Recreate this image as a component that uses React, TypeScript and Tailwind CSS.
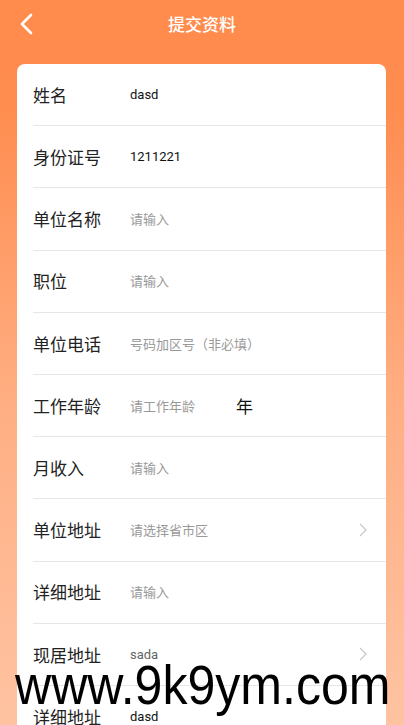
import React from "react";

type Row = {
  label: string;
  value?: string;
  placeholder?: string;
  gray?: boolean;
  arrow?: boolean;
  suffix?: string;
};

const rows: Row[] = [
  { label: "姓名", value: "dasd" },
  { label: "身份证号", value: "1211221" },
  { label: "单位名称", placeholder: "请输入" },
  { label: "职位", placeholder: "请输入" },
  { label: "单位电话", placeholder: "号码加区号（非必填）" },
  { label: "工作年龄", placeholder: "请工作年龄", suffix: "年" },
  { label: "月收入", placeholder: "请输入" },
  { label: "单位地址", placeholder: "请选择省市区", arrow: true },
  { label: "详细地址", placeholder: "请输入" },
  { label: "现居地址", value: "sada", gray: true, arrow: true },
  { label: "详细地址", value: "dasd" },
];

const Chevron = () => (
  <svg width="10" height="16" viewBox="0 0 10 16" fill="none">
    <polyline points="2,2 8,8 2,14" stroke="#c8c9cc" strokeWidth="1.3" />
  </svg>
);

export default function App() {
  return (
    <div className="relative w-[404px] h-[725px] overflow-hidden bg-[linear-gradient(180deg,#ff8b4c_0%,#ff8d50_15%,#ffae82_55%,#ffc3a2_100%)] font-['Noto_Sans_CJK_SC',sans-serif]">
      <div className="relative h-[48px] flex items-center justify-center">
        <svg
          className="absolute left-[19px] top-[13px]"
          width="16"
          height="22"
          viewBox="0 0 16 22"
          fill="none"
        >
          <polyline points="12,2 3,11 12,20" stroke="#ffffff" strokeWidth="2.6" strokeLinecap="round" strokeLinejoin="round" />
        </svg>
        <span className="text-white text-[17px] font-medium">提交资料</span>
      </div>
      <div className="mt-[16px] ml-[17px] mr-[18px] bg-white rounded-[8px]">
        {rows.map((r, i) => (
          <div key={i} className="ml-[16px] h-[62.2px] border-b border-[#e6e6e6] flex items-center pr-[18px]">
            <div className="w-[97px] shrink-0 text-[17px] text-[#222]">{r.label}</div>
            <div className="flex-1 flex items-center">
              {r.value ? (
                <span
                  className={
                    r.gray
                      ? "text-[13px] text-[#646566] font-['Roboto','Noto_Sans_CJK_SC',sans-serif]"
                      : "text-[13px] text-[#111] font-['Roboto','Noto_Sans_CJK_SC',sans-serif]"
                  }
                >
                  {r.value}
                </span>
              ) : (
                <span className="text-[13px] text-[#999]">{r.placeholder}</span>
              )}
              {r.suffix && <span className="ml-[41px] text-[17px] text-[#111]">{r.suffix}</span>}
            </div>
            {r.arrow && <Chevron />}
          </div>
        ))}
      </div>
      <div className="absolute left-[15px] top-[658px] text-[55px] leading-none text-black whitespace-nowrap origin-left scale-x-[0.91] font-['Liberation_Sans',Arial,sans-serif]">
        www.9k9ym.com
      </div>
    </div>
  );
}
